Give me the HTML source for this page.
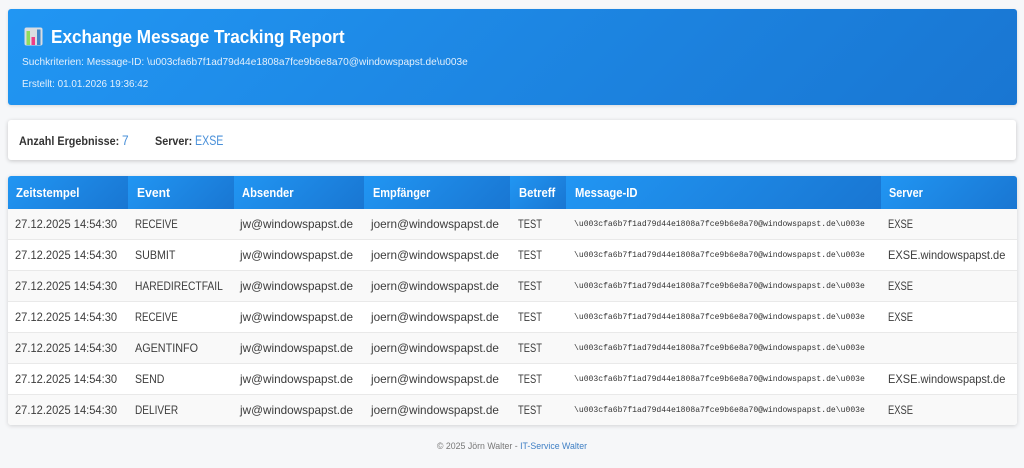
<!DOCTYPE html>
<html lang="de"><head><meta charset="utf-8"><title>Exchange Message Tracking Report</title>
<style>
*{box-sizing:border-box;margin:0;padding:0}
html,body{width:1024px;height:468px;overflow:hidden;background:#f6f7f9;font-family:"Liberation Sans",sans-serif;color:#333}
.abs{position:absolute;white-space:nowrap;transform-origin:0 50%}
#hdr{position:absolute;left:8px;top:9px;width:1009px;height:96px;border-radius:3px;background:linear-gradient(135deg,#2196f3,#1976d2);box-shadow:0 1px 3px rgba(0,0,0,.12)}
#sum{position:absolute;left:8px;top:120px;width:1008px;height:40px;border-radius:3px;background:#fff;box-shadow:0 1px 4px rgba(0,0,0,.2)}
#tbl{position:absolute;left:8px;top:176px;width:1009px;height:249px;border-radius:3px;overflow:hidden;background:#fff;box-shadow:0 1px 4px rgba(0,0,0,.15)}
.th{position:absolute;top:0;height:33px;background:linear-gradient(135deg,#2196f3,#1976d2)}
.t{color:#fff;font-weight:bold;font-size:12.5px;top:186px}
.row{position:absolute;left:0;width:1009px;height:31px;border-bottom:1px solid #e9e9e9}
.c{font-size:12px;color:#3c3c3c}
.m{font-family:"Liberation Mono",monospace;font-size:8.08px;color:#333;left:574px}
.d{left:15px;transform:scaleX(.927)}
.a{left:240px;transform:scaleX(.978)}
.e{left:371px;transform:scaleX(.977)}
.s{left:518px;transform:scaleX(.78)}
.x{left:888px;transform:scaleX(.78)}
.f{left:888px;transform:scaleX(.921)}
.v{left:135px}
</style></head><body>
<div id="hdr"></div>
<svg class="abs" style="left:24px;top:27px" width="19" height="19" viewBox="0 0 19 19"><rect x="0.5" y="0.5" width="18" height="18" rx="2" fill="#d9dde2"/><rect x="2.5" y="4" width="3.5" height="14" fill="#8fdc5e"/><rect x="7.5" y="10" width="3.5" height="8" fill="#ee3d86"/><rect x="13" y="2.5" width="3.5" height="15.5" fill="#3f87c9"/></svg>
<div class="abs" style="left:51px;top:26px;font-size:18.5px;font-weight:bold;color:#fff;transform:scaleX(.927)">Exchange Message Tracking Report</div>
<div class="abs" style="left:22px;top:56px;font-size:10.5px;color:#e3f0fc;transform:scaleX(.965)">Suchkriterien: Message-ID: \u003cfa6b7f1ad79d44e1808a7fce9b6e8a70@windowspapst.de\u003e</div>
<div class="abs" style="left:22px;top:78px;font-size:10.5px;color:#e3f0fc;transform:scaleX(.94)">Erstellt: 01.01.2026 19:36:42</div>
<div id="sum"></div>
<div class="abs" style="left:19px;top:134px;font-size:12px;font-weight:bold;color:#333;transform:scaleX(.9)">Anzahl Ergebnisse:</div>
<div class="abs" style="left:122px;top:132px;font-size:14px;color:#4a90d9;transform:scaleX(.85)">7</div>
<div class="abs" style="left:155px;top:134px;font-size:12px;font-weight:bold;color:#333;transform:scaleX(.9)">Server:</div>
<div class="abs" style="left:195px;top:132px;font-size:14px;color:#4a90d9;transform:scaleX(.76)">EXSE</div>
<div id="tbl">
<div class="th" style="left:0;width:120px"></div><div class="th" style="left:120px;width:106px"></div><div class="th" style="left:226px;width:130px"></div><div class="th" style="left:356px;width:146px"></div><div class="th" style="left:502px;width:56px"></div><div class="th" style="left:558px;width:315px"></div><div class="th" style="left:873px;width:136px"></div>
<div class="row" style="top:33px;background:#f9f9f9"></div><div class="row" style="top:64px;background:#fff"></div><div class="row" style="top:95px;background:#f9f9f9"></div><div class="row" style="top:126px;background:#fff"></div><div class="row" style="top:157px;background:#f9f9f9"></div><div class="row" style="top:188px;background:#fff"></div><div class="row" style="top:219px;background:#f9f9f9;height:30px;border:0"></div>
</div>
<div class="abs t" style="left:16px;transform:scaleX(.913)">Zeitstempel</div><div class="abs t" style="left:137px;transform:scaleX(.97)">Event</div><div class="abs t" style="left:242px;transform:scaleX(.895)">Absender</div><div class="abs t" style="left:373px;transform:scaleX(.877)">Empfänger</div><div class="abs t" style="left:519px;transform:scaleX(.9)">Betreff</div><div class="abs t" style="left:575px;transform:scaleX(.9)">Message-ID</div><div class="abs t" style="left:889px;transform:scaleX(.87)">Server</div>

<div class="abs c d" style="top:217px">27.12.2025 14:54:30</div><div class="abs c v" style="top:217px;transform:scaleX(.81)">RECEIVE</div><div class="abs c a" style="top:217px">jw@windowspapst.de</div><div class="abs c e" style="top:217px">joern@windowspapst.de</div><div class="abs c s" style="top:217px">TEST</div><div class="abs m" style="top:220px">\u003cfa6b7f1ad79d44e1808a7fce9b6e8a70@windowspapst.de\u003e</div><div class="abs c x" style="top:217px">EXSE</div>

<div class="abs c d" style="top:248px">27.12.2025 14:54:30</div><div class="abs c v" style="top:248px;transform:scaleX(.89)">SUBMIT</div><div class="abs c a" style="top:248px">jw@windowspapst.de</div><div class="abs c e" style="top:248px">joern@windowspapst.de</div><div class="abs c s" style="top:248px">TEST</div><div class="abs m" style="top:251px">\u003cfa6b7f1ad79d44e1808a7fce9b6e8a70@windowspapst.de\u003e</div><div class="abs c f" style="top:248px">EXSE.windowspapst.de</div>

<div class="abs c d" style="top:279px">27.12.2025 14:54:30</div><div class="abs c v" style="top:279px;transform:scaleX(.855)">HAREDIRECTFAIL</div><div class="abs c a" style="top:279px">jw@windowspapst.de</div><div class="abs c e" style="top:279px">joern@windowspapst.de</div><div class="abs c s" style="top:279px">TEST</div><div class="abs m" style="top:282px">\u003cfa6b7f1ad79d44e1808a7fce9b6e8a70@windowspapst.de\u003e</div><div class="abs c x" style="top:279px">EXSE</div>

<div class="abs c d" style="top:310px">27.12.2025 14:54:30</div><div class="abs c v" style="top:310px;transform:scaleX(.81)">RECEIVE</div><div class="abs c a" style="top:310px">jw@windowspapst.de</div><div class="abs c e" style="top:310px">joern@windowspapst.de</div><div class="abs c s" style="top:310px">TEST</div><div class="abs m" style="top:313px">\u003cfa6b7f1ad79d44e1808a7fce9b6e8a70@windowspapst.de\u003e</div><div class="abs c x" style="top:310px">EXSE</div>

<div class="abs c d" style="top:341px">27.12.2025 14:54:30</div><div class="abs c v" style="top:341px;transform:scaleX(.9)">AGENTINFO</div><div class="abs c a" style="top:341px">jw@windowspapst.de</div><div class="abs c e" style="top:341px">joern@windowspapst.de</div><div class="abs c s" style="top:341px">TEST</div><div class="abs m" style="top:344px">\u003cfa6b7f1ad79d44e1808a7fce9b6e8a70@windowspapst.de\u003e</div>

<div class="abs c d" style="top:372px">27.12.2025 14:54:30</div><div class="abs c v" style="top:372px;transform:scaleX(.88)">SEND</div><div class="abs c a" style="top:372px">jw@windowspapst.de</div><div class="abs c e" style="top:372px">joern@windowspapst.de</div><div class="abs c s" style="top:372px">TEST</div><div class="abs m" style="top:375px">\u003cfa6b7f1ad79d44e1808a7fce9b6e8a70@windowspapst.de\u003e</div><div class="abs c f" style="top:372px">EXSE.windowspapst.de</div>

<div class="abs c d" style="top:403px">27.12.2025 14:54:30</div><div class="abs c v" style="top:403px;transform:scaleX(.84)">DELIVER</div><div class="abs c a" style="top:403px">jw@windowspapst.de</div><div class="abs c e" style="top:403px">joern@windowspapst.de</div><div class="abs c s" style="top:403px">TEST</div><div class="abs m" style="top:406px">\u003cfa6b7f1ad79d44e1808a7fce9b6e8a70@windowspapst.de\u003e</div><div class="abs c x" style="top:403px">EXSE</div>

<div class="abs" style="left:437px;top:441px;font-size:9px;color:#777;transform:scaleX(.974)">© 2025 Jörn Walter - <span style="color:#3f7fc4">IT-Service Walter</span></div>
</body></html>
